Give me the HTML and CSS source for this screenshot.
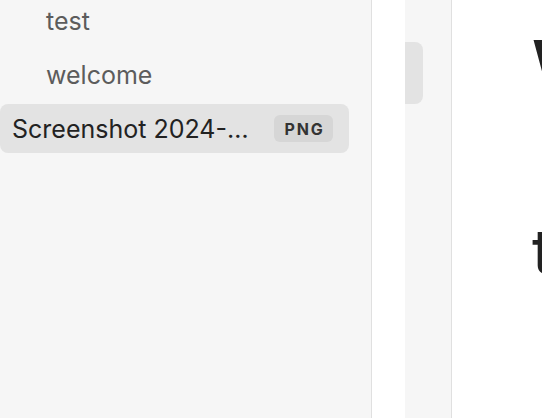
FILE: index.html
```html
<!DOCTYPE html>
<html>
<head>
<meta charset="utf-8">
<link rel="stylesheet" href="styles.css">
</head>
<body>
<div class="app">
  <aside class="sidebar">
    <div class="row child">test</div>
    <div class="row child">welcome</div>
    <div class="row active">
      <span class="name">Screenshot 2024-…</span>
      <span class="badge">PNG</span>
    </div>
  </aside>
  <div class="gap"></div>
  <div class="pane">
    <div class="pane-item"></div>
  </div>
  <main class="content">
    <h1 class="title">Welcome</h1>
    <p class="para">test</p>
  </main>
</div>
</body>
</html>
```

FILE: styles.css
```css
html, body {
  margin: 0;
  padding: 0;
  width: 542px;
  height: 418px;
  overflow: hidden;
  background: #ffffff;
  font-family: Inter, "Liberation Sans", sans-serif;
}
.app {
  display: flex;
  height: 418px;
}
.sidebar {
  width: 371px;
  flex: none;
  background: #f6f6f6;
  border-right: 1px solid #e0e0e0;
  display: flex;
  flex-direction: column;
  gap: 5px;
  margin-top: -4px;
}
.row {
  height: 49px;
  display: flex;
  align-items: center;
  font-size: 25px;
  color: #5c5c5c;
  width: 349px;
  box-sizing: border-box;
  border-radius: 8px;
}
.child {
  padding-left: 46px;
}
.active {
  background: #e3e3e3;
  color: #222222;
  padding-left: 12px;
}
.name {
  flex: none;
  width: 262px;
}
.badge {
  font-size: 16px;
  font-weight: 700;
  letter-spacing: 1.8px;
  background: #d6d6d6;
  color: #333333;
  border-radius: 6px;
  height: 27px;
  width: 59px;
  display: flex;
  align-items: center;
  justify-content: center;
  box-sizing: border-box;
  padding-left: 2px;
}
.gap {
  width: 33px;
  flex: none;
  background: #ffffff;
}
.pane {
  width: 46px;
  flex: none;
  background: #f6f6f6;
  border-right: 1px solid #e0e0e0;
  padding-top: 42px;
}
.pane-item {
  width: 18px;
  height: 62px;
  background: #e3e3e3;
  border-radius: 0 8px 8px 0;
}
.content {
  flex: 1;
  min-width: 0;
  padding-left: 80px;
  overflow: hidden;
  white-space: nowrap;
}
.title {
  margin: 24px 0 0;
  font-size: 68px;
  font-weight: 800;
  color: #222222;
  line-height: 80px;
}
.para {
  margin: 108px 0 0;
  font-size: 62px;
  color: #222222;
  line-height: 80px;
}
```
